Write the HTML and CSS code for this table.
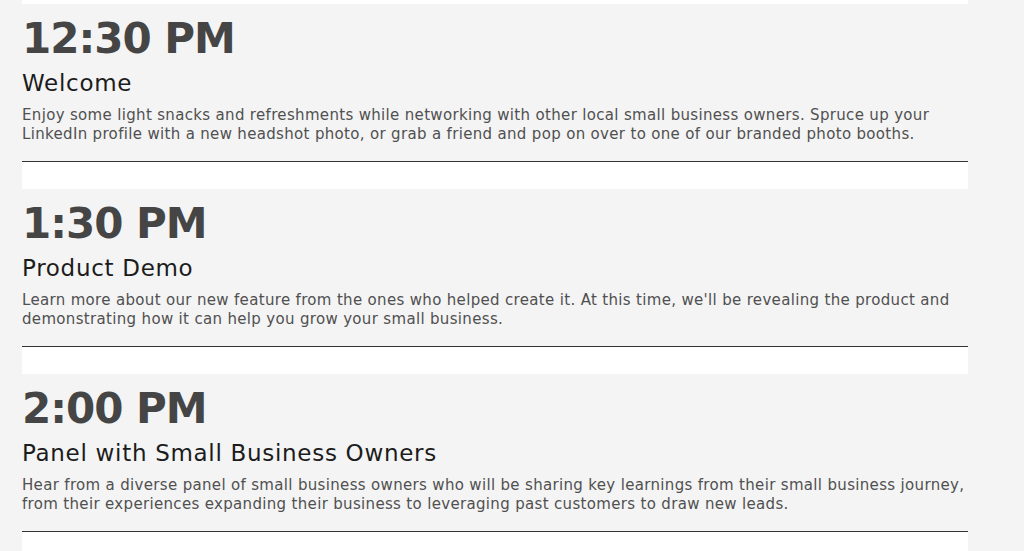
FILE: index.html
```html
<!DOCTYPE html>
<html lang="en">
<head>
<meta charset="utf-8">
<title>Agenda</title>
<link rel="stylesheet" href="styles.css">
</head>
<body>
<div class="agenda">
  <div class="item">
    <div class="time">12:30 PM</div>
    <div class="title">Welcome</div>
    <p class="desc">Enjoy some light snacks and refreshments while networking with other local small business owners. Spruce up your LinkedIn profile with a new headshot photo, or grab a friend and pop on over to one of our branded photo booths.</p>
  </div>
  <div class="item">
    <div class="time">1:30 PM</div>
    <div class="title">Product Demo</div>
    <p class="desc">Learn more about our new feature from the ones who helped create it. At this time, we'll be revealing the product and demonstrating how it can help you grow your small business.</p>
  </div>
  <div class="item">
    <div class="time">2:00 PM</div>
    <div class="title">Panel with Small Business Owners</div>
    <p class="desc">Hear from a diverse panel of small business owners who will be sharing key learnings from their small business journey, from their experiences expanding their business to leveraging past customers to draw new leads.</p>
  </div>
</div>
</body>
</html>
```
FILE: styles.css
```css
html, body {
  margin: 0;
  padding: 0;
  background: #f4f4f4;
  font-family: "DejaVu Sans", "Liberation Sans", sans-serif;
}

.agenda {
  margin-left: 22px;
  width: 946px;
  background: #ffffff;
  padding-top: 4px;
  padding-bottom: 27px;
  display: flex;
  flex-direction: column;
  gap: 27px;
}

.item {
  background: #f4f4f4;
  border-bottom: 1px solid #333333;
  height: 157px;
  display: flex;
  flex-direction: column;
}

.time {
  font-weight: bold;
  font-size: 42px;
  line-height: 52px;
  color: #454545;
  letter-spacing: -1px;
  margin-top: 9px;
}

.title {
  font-size: 23px;
  line-height: 28px;
  letter-spacing: 0.7px;
  color: #1c1c1c;
  margin-top: 4px;
}

.desc {
  margin: 9px 0 0 0;
  font-size: 15px;
  line-height: 19px;
  letter-spacing: 0.33px;
  color: #505050;
}
```
